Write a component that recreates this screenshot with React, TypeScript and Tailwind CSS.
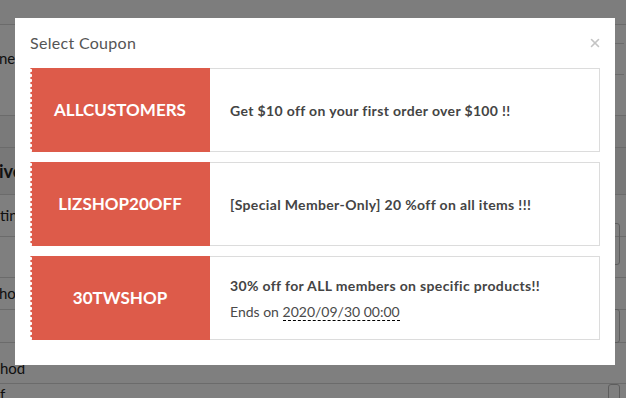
import { X } from "lucide-react"

interface Coupon {
    code: string;
    title: string;
    endsOn?: string;
}

const coupons: Coupon[] = [
    { code: "ALLCUSTOMERS", title: "Get $10 off on your first order over $100 !!" },
    { code: "LIZSHOP20OFF", title: "[Special Member-Only] 20 %off on all items !!!" },
    { code: "30TWSHOP", title: "30% off for ALL members on specific products!!", endsOn: "2020/09/30 00:00" },
]

const font = "font-['Lato','Noto_Sans',sans-serif]"

// the page that sits behind the dimmed overlay
const BackgroundPage = () => (
    <div className={`w-[626px] h-[398px] bg-white text-[#222] ${font} overflow-hidden`}>
        <div className="h-[25px] border-b border-[#d6d6d6] bg-[#fafafa]" />
        <div className="h-[91px] border-b border-[#d6d6d6] flex items-start pt-[22px]">
            <span className="text-[15px] -ml-[1px]">ned</span>
            <div className="ml-auto mr-[2px] mt-[-4px] h-[32px] w-[10px] border-y border-[#d6d6d6]" />
        </div>
        <div className="h-[32px] border-b border-[#d6d6d6] bg-[#f4f4f4]" />
        <div className="h-[47px] border-b border-[#d6d6d6] bg-[#f0f0f0] flex items-center">
            <span className="text-[18px] font-bold -ml-[1px]">ive</span>
        </div>
        <div className="h-[42px] border-b border-[#d6d6d6] flex items-center">
            <span className="text-[15px]">tin</span>
            <div className="ml-auto mr-[6px] mt-[56px] h-[42px] w-[12px] border border-[#bbb] rounded-[3px]" />
        </div>
        <div className="h-[41px] border-b border-[#d6d6d6]" />
        <div className="h-[32px] border-b border-[#d6d6d6] flex items-center">
            <span className="text-[15px] -ml-[1px]">hod</span>
        </div>
        <div className="h-[33px] border-b border-[#d6d6d6] flex">
            <div className="ml-auto mr-[6px] -mt-[1px] h-[34px] w-[12px] border border-[#bbb] rounded-[3px]" />
        </div>
        <div className="h-[41px] border-b border-[#d6d6d6] flex items-end pb-[4px]">
            <span className="text-[15px]">hod</span>
        </div>
        <div className="flex">
            <span className="text-[15px] -mt-[1px]">f</span>
            <div className="ml-auto mr-[6px] h-[20px] w-[12px] border border-[#bbb] rounded-[3px]" />
        </div>
    </div>
)

const CouponRow = ({ coupon }: { coupon: Coupon }) => (
    <div className="flex h-[84px]">
        <div className="relative w-[180px] bg-[#dd5b4a] flex items-center justify-center">
            <div className="absolute left-0 top-0 h-full w-[3px] bg-[radial-gradient(circle_at_0_50%,#ffffff_1.7px,transparent_2.3px)] bg-[length:3px_5px]" />
            <span className="text-white font-bold text-[17px]">{coupon.code}</span>
        </div>
        <div className="flex-1 border border-l-0 border-[#dcdcdc] pl-5 flex flex-col justify-center text-[14px] text-[#444]">
            <p className="font-bold tracking-[0.35px]">{coupon.title}</p>
            {coupon.endsOn && (
                <p className="mt-[5px] text-[#4a4a4a]">
                    Ends on{" "}
                    <span className="border-b border-dashed border-black">{coupon.endsOn}</span>
                </p>
            )}
        </div>
    </div>
)

export default function App() {
    return (
        <div className="relative w-[626px] h-[398px] overflow-hidden">
            <BackgroundPage />
            <div className={`absolute inset-0 bg-black/50 ${font}`}>
                <div className="ml-[15px] mt-[18px] w-[600px] bg-white px-[15px] pt-[16px] pb-[25px]">
                    <div className="flex items-center justify-between h-[18px] mb-[16px]">
                        <h3 className="text-[16px] tracking-[0.3px] text-[#555]">Select Coupon</h3>
                        <X className="w-[14px] h-[14px] text-[#c4c4c4] mr-[-2px]" strokeWidth={2.8} />
                    </div>
                    <div className="flex flex-col gap-[10px]">
                        {coupons.map((c) => (
                            <CouponRow key={c.code} coupon={c} />
                        ))}
                    </div>
                </div>
            </div>
        </div>
    )
}
